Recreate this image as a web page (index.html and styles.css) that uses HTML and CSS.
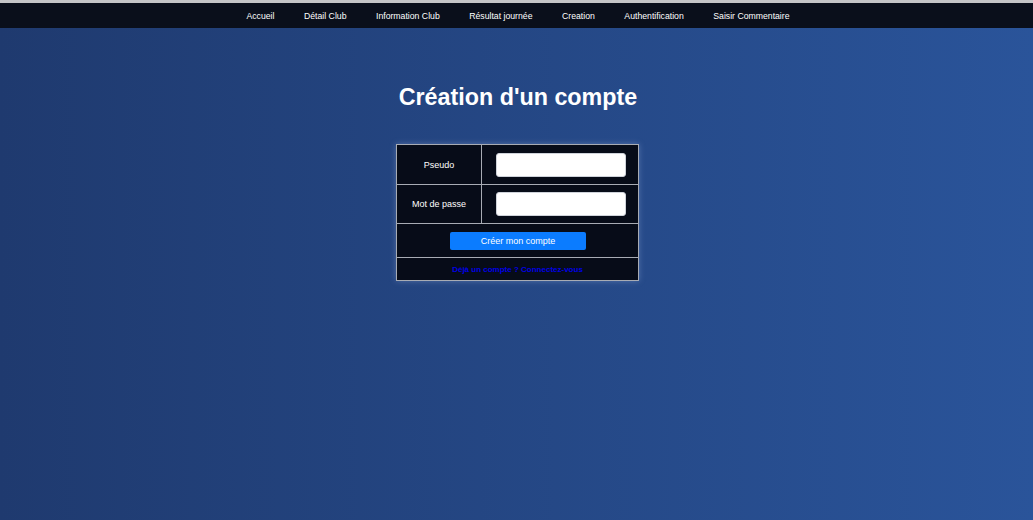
FILE: index.html
```html
<!DOCTYPE html>
<html>
<head>
    <title>Création d'un compte</title>
    <meta charset="utf-8" />
    <link rel="stylesheet" href="styles.css">
</head>
<body>
    <nav class="menu">
        <a href="#">Accueil</a>
        <a href="#">Détail Club</a>
        <a href="#">Information Club</a>
        <a href="#">Résultat journée</a>
        <a href="#">Creation</a>
        <a href="#">Authentification</a>
        <a href="#">Saisir Commentaire</a>
    </nav>
    <h1>Création d'un compte</h1>
    <form class="compte">
        <table>
            <tr class="champ">
                <td class="label">Pseudo</td>
                <td class="saisie"><input type="text" /></td>
            </tr>
            <tr class="champ champ2">
                <td class="label">Mot de passe</td>
                <td class="saisie"><input type="password" /></td>
            </tr>
            <tr class="action">
                <td colspan="2"><button type="button">Créer mon compte</button></td>
            </tr>
            <tr class="lien">
                <td colspan="2"><a href="#">Déjà un compte ? Connectez-vous</a></td>
            </tr>
        </table>
    </form>
</body>
</html>
```
FILE: styles.css
```css
html,
body {
    margin: 0px;
    height: 100%;
}

body {
    font-family: "Liberation Sans", Arial, sans-serif;
    background: linear-gradient(to right, #1f3a6f, #2a549a);
    color: #ffffff;
}

.menu {
    border-top: 3px solid #c4c5c7;
    background-color: #0a0f1b;
    height: 25px;
    display: flex;
    justify-content: center;
    align-items: center;
    gap: 29.5px;
    padding-left: 3px;
}

.menu a {
    color: #ffffff;
    text-decoration: none;
    font-size: 8.7px;
}

h1 {
    margin: 55px 0px 0px 0px;
    padding-left: 3px;
    text-align: center;
    font-size: 23.3px;
    line-height: 28px;
}

.compte {
    display: flex;
    justify-content: center;
    margin-top: 33px;
}

.compte table {
    width: 243px;
    border-collapse: collapse;
    background-color: #070c18;
    box-shadow: 0px 0px 6px rgba(170, 190, 230, 0.35);
    font-size: 9px;
    margin-left: 2px;
}

.compte td {
    border: 1px solid #a8acb4;
    padding: 0px;
    text-align: center;
}

.champ td {
    height: 39px;
}

.champ2 td {
    height: 38px;
}

.label {
    width: 84px;
}

.saisie {
    text-align: left;
}

.saisie input {
    display: block;
    box-sizing: border-box;
    width: 130px;
    height: 24px;
    margin-left: 14px;
    border: 1px solid #cfd3da;
    border-radius: 3px;
    background-color: #ffffff;
}

.action td {
    height: 33px;
}

.action button {
    width: 136px;
    height: 18px;
    border: none;
    border-radius: 2px;
    background-color: #0b7cff;
    color: #ffffff;
    font-family: inherit;
    font-size: 9px;
    margin-left: 1px;
}

.lien td {
    height: 22px;
}

.lien a {
    color: #0000e6;
    font-weight: bold;
    text-decoration: none;
    font-size: 8px;
}
```
